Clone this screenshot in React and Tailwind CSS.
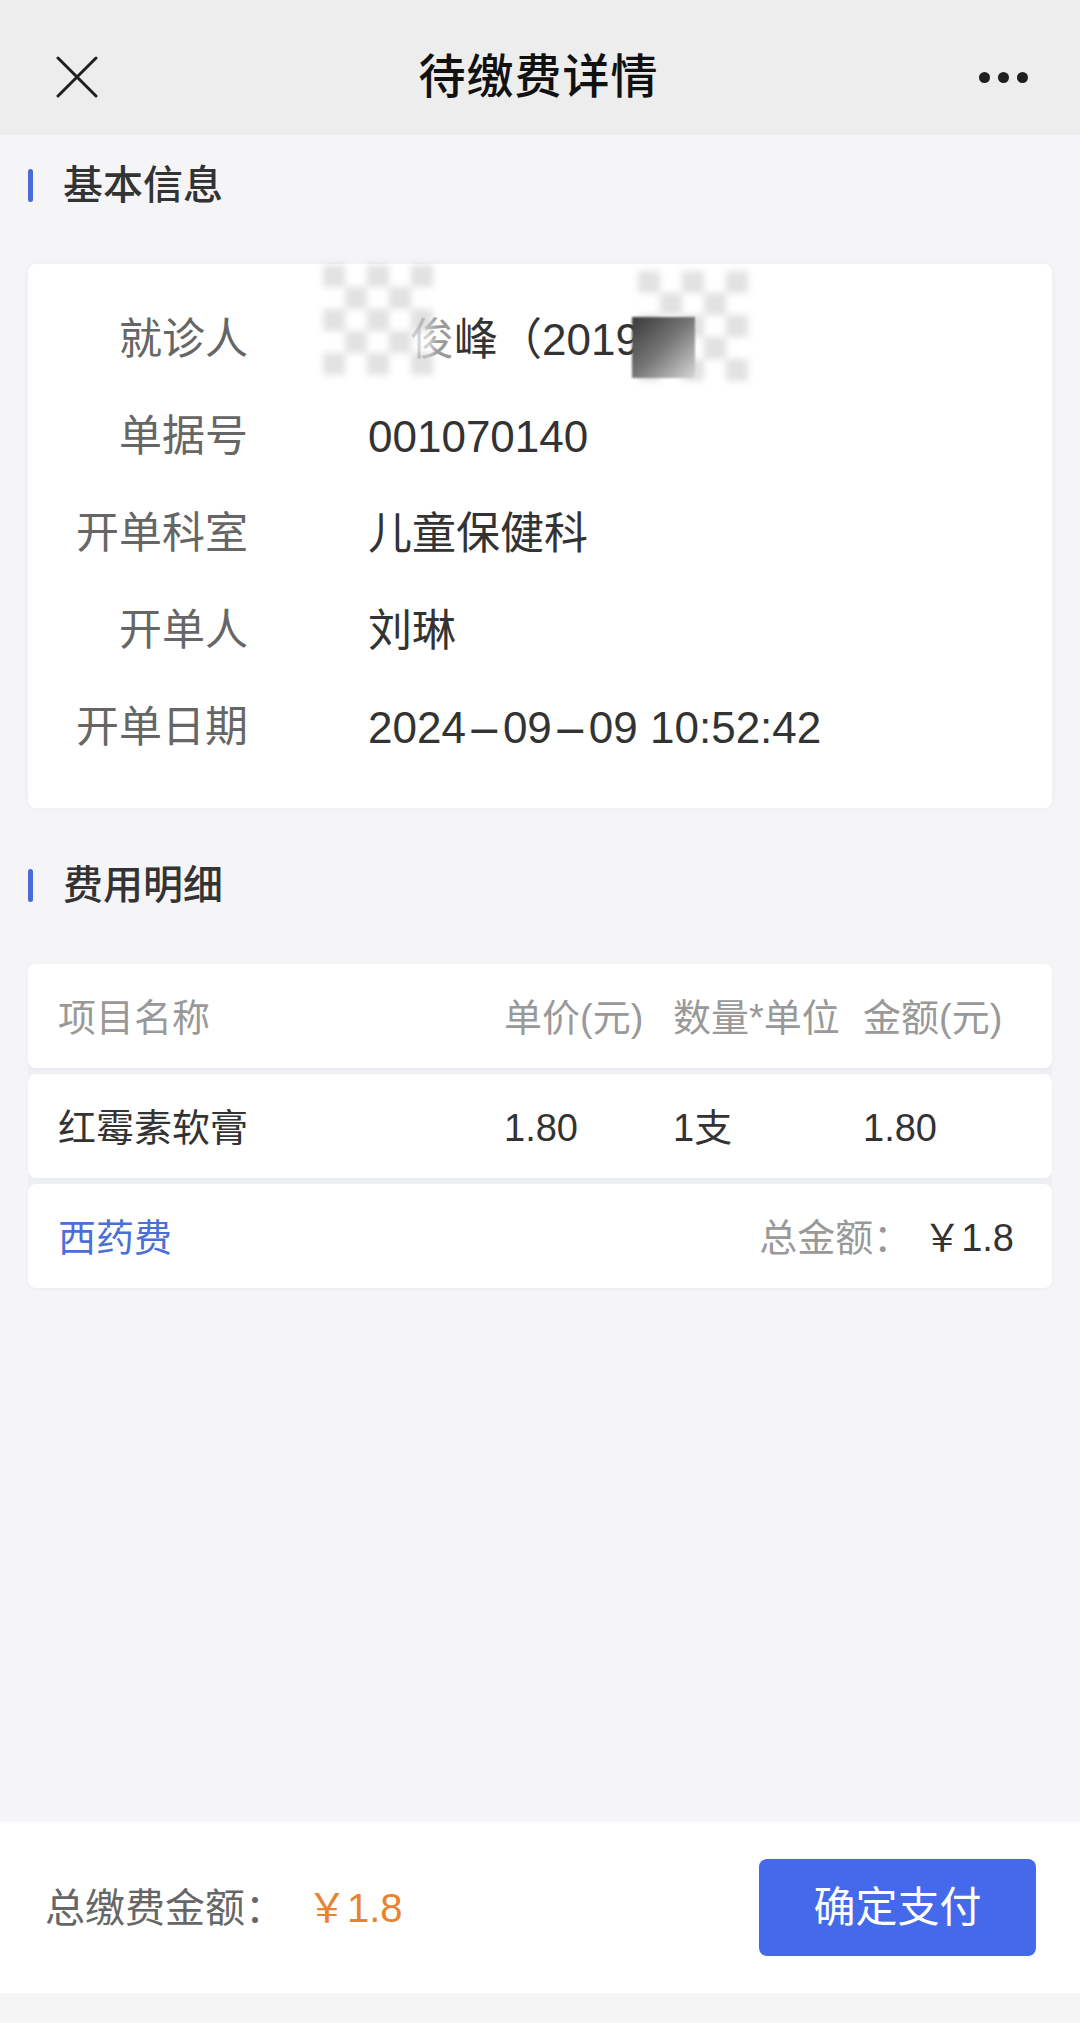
import React from 'react';

const font = { fontFamily: '"Liberation Sans", "Noto Sans CJK SC", sans-serif' };

const Dash = () => (
    <span className="inline-block w-[37px] text-center">
        <span className="inline-block scale-x-[2.4]">-</span>
    </span>
);

const infoRows = [
    { label: '就诊人', value: null },
    { label: '单据号', value: '001070140' },
    { label: '开单科室', value: '儿童保健科' },
    { label: '开单人', value: '刘琳' },
    {
        label: '开单日期',
        value: (
            <>
                2024<Dash />09<Dash />09 10:52:42
            </>
        ),
    },
];

// blurred mosaic squares used to hide the patient name
const Mosaic = ({ className }) => (
    <div className={`absolute w-[110px] grid grid-cols-5 blur-[3px] opacity-60 ${className}`}>
        {Array.from({ length: 25 }).map((_, i) => (
            <div
                key={i}
                className={`w-[22px] h-[22px] ${((i % 5) + Math.floor(i / 5)) % 2 === 0 ? 'bg-[#cfcfcf]' : 'bg-white'}`}
            />
        ))}
    </div>
);

const SectionTitle = ({ children, className = '' }) => (
    <div className={`flex items-center h-[100px] pl-[28px] ${className}`}>
        <span className="w-[5px] h-[33px] rounded-full bg-[#4a6cd9]" />
        <span className="ml-[30px] text-[40px] font-medium text-[#333]">{children}</span>
    </div>
);

const App = () => {
    return (
        <div className="w-[1080px] h-[2023px] flex flex-col bg-[#f5f5f7]" style={font}>
            {/* top bar */}
            <div className="h-[135px] shrink-0 bg-[#ededed] flex items-center justify-between pt-[19px] pl-[56px] pr-[52px]">
                <svg width="42" height="42" viewBox="0 0 42 42" fill="none" stroke="#1f1f1f" strokeWidth="3" strokeLinecap="round">
                    <path d="M2 2L40 40M40 2L2 40" />
                </svg>
                <h1 className="text-[47px] font-medium text-[#111] tracking-[1px]">待缴费详情</h1>
                <div className="flex items-center gap-[8px]">
                    <span className="w-[11px] h-[11px] rounded-full bg-[#1f1f1f]" />
                    <span className="w-[11px] h-[11px] rounded-full bg-[#1f1f1f]" />
                    <span className="w-[11px] h-[11px] rounded-full bg-[#1f1f1f]" />
                </div>
            </div>

            <div className="flex-1">
                <SectionTitle>基本信息</SectionTitle>
                <div className="mx-[28px] mt-[29px] bg-white rounded-[8px] shadow-[0_0_8px_rgba(0,0,0,0.04)] pt-[27px] pb-[32px]">
                    {infoRows.map((row) => (
                        <div key={row.label} className="flex items-center h-[97px]">
                            <div className="w-[220px] text-right text-[43px] text-[#666]">{row.label}</div>
                            <div className="ml-[120px] text-[44px] text-[#333] relative">
                                {row.value ?? (
                                    <div className="relative">
                                        <span className="pl-[42px] text-[#333]">
                                            <span className="text-[#9a9a9a]">俊</span>峰（2019
                                        </span>
                                        <Mosaic className="left-[-45px] top-[-42px]" />
                                        <Mosaic className="left-[270px] top-[-36px]" />
                                        <div className="absolute left-[264px] top-[10px] w-[63px] h-[61px] bg-gradient-to-br from-[#3a3a3a] via-[#777] to-[#d8d8d8] blur-[1px]" />
                                    </div>
                                )}
                            </div>
                        </div>
                    ))}
                </div>

                <SectionTitle className="mt-[27px]">费用明细</SectionTitle>
                <div className="mx-[28px] mt-[29px] flex flex-col gap-[6px] bg-[#eef0f4] rounded-[8px]">
                    <div className="h-[104px] flex items-center bg-white rounded-[8px] pl-[30px] pt-[4px] text-[38px] text-[#999] shadow-[0_1px_4px_rgba(0,0,0,0.04)]">
                        <div className="w-[446px]">项目名称</div>
                        <div className="w-[169px]">单价(元)</div>
                        <div className="w-[190px]">数量*单位</div>
                        <div>金额(元)</div>
                    </div>
                    <div className="h-[104px] flex items-center bg-white rounded-[8px] pl-[30px] pt-[4px] text-[38px] text-[#333] shadow-[0_1px_4px_rgba(0,0,0,0.04)]">
                        <div className="w-[446px]">红霉素软膏</div>
                        <div className="w-[169px]">1.80</div>
                        <div className="w-[190px]">1支</div>
                        <div>1.80</div>
                    </div>
                    <div className="h-[104px] flex items-center justify-between bg-white rounded-[8px] pl-[30px] pr-[38px] pt-[4px] text-[38px] shadow-[0_1px_4px_rgba(0,0,0,0.04)]">
                        <div className="text-[#4a6fd6]">西药费</div>
                        <div className="flex items-center">
                            <span className="text-[#999]">总金额：</span>
                            <span className="ml-[12px] text-[#333]">￥1.8</span>
                        </div>
                    </div>
                </div>
            </div>

            {/* bottom pay bar */}
            <div className="h-[171px] shrink-0 bg-white flex items-center justify-between pl-[45px] pr-[44px]">
                <div className="flex items-center text-[40px]">
                    <span className="text-[#666]">总缴费金额：</span>
                    <span className="ml-[22px] text-[#e8822f]">￥1.8</span>
                </div>
                <button className="w-[277px] h-[97px] rounded-[8px] bg-[#4569eb] text-white text-[42px]">确定支付</button>
            </div>
            <div className="h-[30px] shrink-0 bg-[#f5f5f5]" />
        </div>
    );
};

export default App;
